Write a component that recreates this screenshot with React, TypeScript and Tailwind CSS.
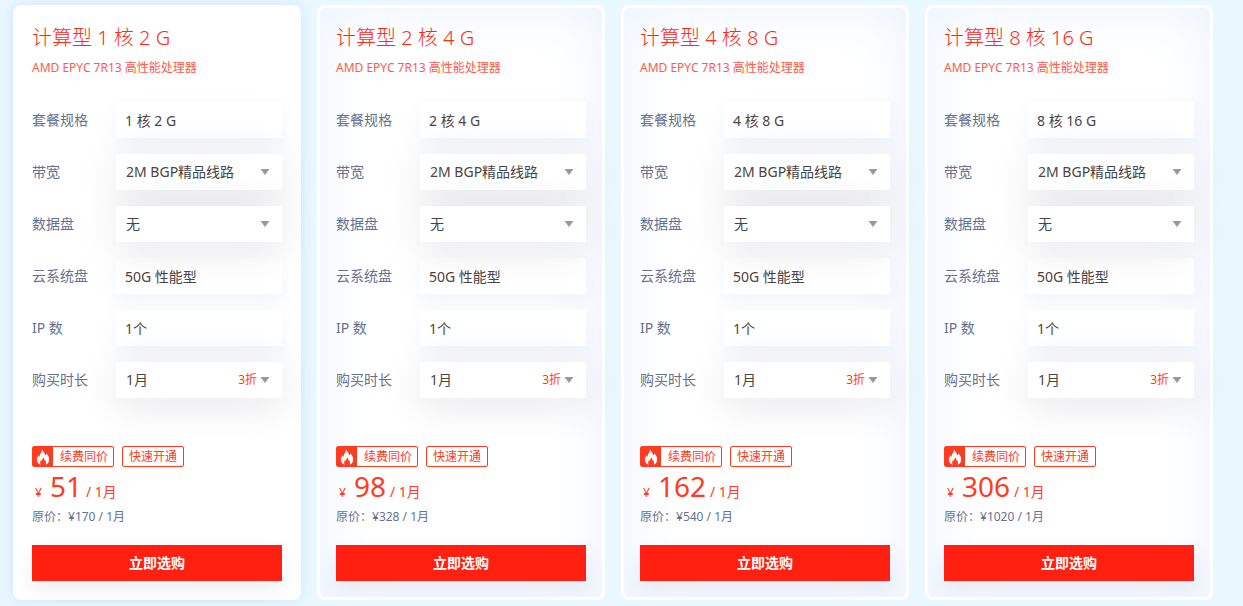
import React from "react";

interface Plan {
  cores: number;
  memory: number;
  price: number;
  original: number;
  active?: boolean;
}

interface FieldProps {
  id: string;
  label: string;
  value: string;
  note?: string;
}

const plans: Plan[] = [
  { cores: 1, memory: 2, price: 51, original: 170, active: true },
  { cores: 2, memory: 4, price: 98, original: 328 },
  { cores: 4, memory: 8, price: 162, original: 540 },
  { cores: 8, memory: 16, price: 306, original: 1020 },
];

const TextField: React.FC<FieldProps> = ({ id, label, value }) => (
  <div className="flex items-center">
    <label htmlFor={id} className="w-21 shrink-0 text-sm text-[#65718f]">
      {label}
    </label>
    <input
      id={id}
      readOnly
      value={value}
      className="h-9 w-full min-w-0 flex-1 bg-white px-[9px] pb-px text-sm text-[#4a4444] shadow-[0_8px_20px_rgba(55,99,170,0.07)] outline-none"
    />
  </div>
);

const SelectField: React.FC<FieldProps> = ({ id, label, value, note }) => (
  <div className="flex items-center">
    <label htmlFor={id} className="w-21 shrink-0 text-sm text-[#65718f]">
      {label}
    </label>
    <div className="relative h-9 min-w-0 flex-1 bg-white shadow-[0_6px_40px_rgba(10,16,50,0.11)]">
      <select
        id={id}
        className="h-full w-full appearance-none px-[10px] text-sm text-[#4a4444] outline-none"
      >
        <option>{value}</option>
      </select>
      <div className="pointer-events-none absolute inset-y-0 right-3 flex items-center gap-[3px]">
        {note && <span className="text-xs text-[#ff3b20]">{note}</span>}
        <svg width="10" height="6" viewBox="0 0 10 6" fill="#999">
          <path d="M0.5 0h9L5 6z" />
        </svg>
      </div>
    </div>
  </div>
);

const Flame = () => (
  <svg width="14" height="16" viewBox="0 0 14 16" fill="#fff">
    <path d="M6.2 0.6C6.7 2.4 9 3.9 9.4 6.6C10 6.1 10.3 5.3 10.3 4.4C12.1 6 13.2 8.1 13.2 10.4C13.2 13 11.8 14.8 9.6 15.6C10.3 14.6 10.3 13.3 9.5 12.1C8.8 11.1 7.8 10.3 7.6 8.7C6.1 9.8 5.8 11 5.9 12.3C5.4 12.1 5.1 11.7 5 11.1C4 12.5 3.9 14.2 4.8 15.6C2.3 14.9 0.8 13 0.8 10.7C0.8 8.9 1.7 7.7 2.4 6.5C2.7 7.2 3 7.6 3.5 7.9C3.5 5 5.8 3.5 6.2 0.6Z" />
  </svg>
);

const PlanCard: React.FC<Plan> = ({
  cores,
  memory,
  price,
  original,
  active = false,
}) => {
  const spec = `${cores} 核 ${memory} G`;
  const id = `plan-${cores}`;

  return (
    <section
      className={`min-w-0 rounded-lg border-3 border-white bg-white p-4 ${
        active
          ? "shadow-[0_0_12px_rgba(80,150,255,0.18)]"
          : "shadow-[inset_0_0_56px_#eaf1ff]"
      }`}
    >
      <h3 className="text-xl leading-7 font-light text-[#ff2a14]">
        计算型 {spec}
      </h3>
      <p className="mt-2 text-xs leading-4 text-[#ff5a48]">
        AMD EPYC 7R13 高性能处理器
      </p>

      <div className="mt-[26px] flex flex-col gap-4">
        <TextField id={`${id}-spec`} label="套餐规格" value={spec} />
        <SelectField id={`${id}-band`} label="带宽" value="2M BGP精品线路" />
        <SelectField id={`${id}-disk`} label="数据盘" value="无" />
        <TextField id={`${id}-system`} label="云系统盘" value="50G 性能型" />
        <TextField id={`${id}-ip`} label="IP 数" value="1个" />
        <SelectField id={`${id}-time`} label="购买时长" value="1月" note="3折" />
      </div>

      <div className="mt-12 flex gap-2 text-xs text-[#ff3b20]">
        <span className="flex h-[21px] items-center rounded-xs border border-[#ff3b20] pr-[5px]">
          <span className="mr-[7px] flex h-full w-5 items-center justify-center bg-[#ff3b20]">
            <Flame />
          </span>
          续费同价
        </span>
        <span className="flex h-[21px] items-center rounded-xs border border-[#ff3b20] px-[6px]">
          快速开通
        </span>
      </div>

      <p className="flex h-[42px] items-baseline pl-[3px] leading-[38px] text-[#ff3b20]">
        <span className="text-xs leading-[38px]">¥</span>
        <span className="mr-1 ml-2 text-[28px] leading-[38px]">{price}</span>
        <span className="text-sm leading-[38px]">/ 1月</span>
      </p>
      <p className="text-xs leading-4 text-[#65718f]">
        原价：¥{original} / 1月
      </p>

      <button
        type="button"
        className="mt-5 block h-9 w-full bg-[#ff2011] text-sm font-bold text-white shadow-[0_8px_20px_rgba(30,40,90,0.08)]"
      >
        立即选购
      </button>
    </section>
  );
};

export default function App() {
  return (
    <main className="min-h-screen bg-[#e9f8ff] bg-[linear-gradient(90deg,#e8f6ff,#e9f8ff_24px)] pt-[5px] pr-[30px] pb-[6px] pl-[13px] font-['Noto_Sans','Noto_Sans_CJK_SC',sans-serif]">
      <div className="grid grid-cols-4 gap-4">
        {plans.map((plan) => (
          <PlanCard key={plan.cores} {...plan} />
        ))}
      </div>
    </main>
  );
}
